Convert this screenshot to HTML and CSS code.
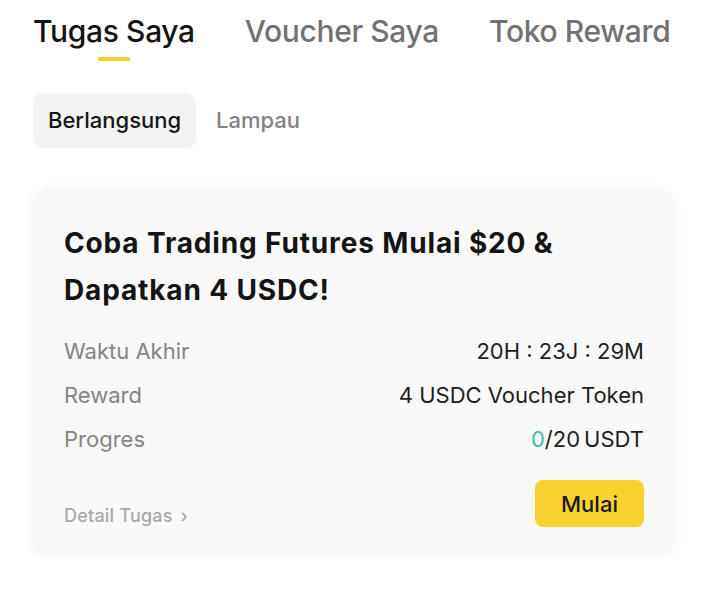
FILE: index.html
```html
<!DOCTYPE html>
<html lang="id">
<head>
<meta charset="utf-8">
<title>Tugas Saya</title>
<link rel="stylesheet" href="styles.css">
</head>
<body>
<nav class="tabs">
  <div class="tab active"><span class="tab-label">Tugas Saya</span><span class="tab-bar"></span></div>
  <div class="tab"><span class="tab-label">Voucher Saya</span></div>
  <div class="tab"><span class="tab-label">Toko Reward</span></div>
</nav>
<div class="subtabs">
  <div class="subtab selected">Berlangsung</div>
  <div class="subtab">Lampau</div>
</div>
<section class="card">
  <h2 class="card-title">Coba Trading Futures Mulai $20 &amp; Dapatkan 4 USDC!</h2>
  <div class="rows">
    <div class="row"><span class="label">Waktu Akhir</span><span class="value">20H : 23J : 29M</span></div>
    <div class="row"><span class="label">Reward</span><span class="value">4 USDC Voucher Token</span></div>
    <div class="row"><span class="label">Progres</span><span class="value"><span class="done">0</span>/20&#8201;USDT</span></div>
  </div>
  <div class="card-footer">
    <a class="detail">Detail Tugas<span class="chev">›</span></a>
    <button class="start">Mulai</button>
  </div>
</section>
</body>
</html>
```
FILE: styles.css
```css
* { box-sizing: border-box; }
body {
  margin: 0;
  background: #ffffff;
  font-family: Inter, "Noto Sans", "Liberation Sans", sans-serif;
  color: #1e1e1e;
  width: 720px;
}
.tabs {
  display: flex;
  gap: 50px;
  padding: 13px 0 0 33px;
}
.tab {
  display: flex;
  flex-direction: column;
  align-items: center;
}
.tab-label {
  font-size: 30px;
  line-height: 36px;
  font-weight: 500;
  color: #727272;
  letter-spacing: -0.35px;
}
.tab.active .tab-label { color: #141414; }
.tab-bar {
  width: 32px;
  height: 4px;
  margin-top: 8px;
  background: #f5cf2b;
  border-radius: 1px;
}
.subtabs {
  display: flex;
  gap: 5px;
  margin: 32px 0 0 33px;
}
.subtab {
  height: 55px;
  line-height: 55px;
  padding: 0 15px;
  font-size: 22px;
  font-weight: 500;
  color: #828282;
  border-radius: 10px;
}
.subtab.selected {
  background: #f4f4f4;
  color: #161616;
}
.card {
  margin: 39px 0 0 32px;
  width: 643px;
  height: 370px;
  background: #f9f9f9;
  border-radius: 20px;
  box-shadow: 0 2px 14px rgba(0, 0, 0, 0.035);
  padding: 33px 31px 30px 32px;
  display: flex;
  flex-direction: column;
}
.card-title {
  margin: 0;
  font-size: 28px;
  line-height: 47px;
  font-weight: 700;
  color: #141414;
  width: 540px;
  letter-spacing: 0.85px;
}
.rows { margin-top: 15px; }
.row {
  display: flex;
  justify-content: space-between;
  height: 44px;
  line-height: 44px;
  font-size: 22px;
}
.label { color: #858585; }
.value { color: #1e1e1e; }
.done { color: #3cc4a6; }
.card-footer {
  margin-top: 19px;
  display: flex;
  justify-content: space-between;
  align-items: flex-end;
}
.detail {
  font-size: 18px;
  line-height: 22px;
  color: #a8a8a8;
  font-weight: 500;
  letter-spacing: 0.2px;
}
.chev {
  margin-left: 8px;
  font-size: 18px;
}
.start {
  width: 109px;
  height: 47px;
  border: none;
  border-radius: 8px;
  background: #f9d232;
  font-family: inherit;
  font-size: 22px;
  font-weight: 500;
  color: #1a1a1a;
  padding: 0;
}
```
